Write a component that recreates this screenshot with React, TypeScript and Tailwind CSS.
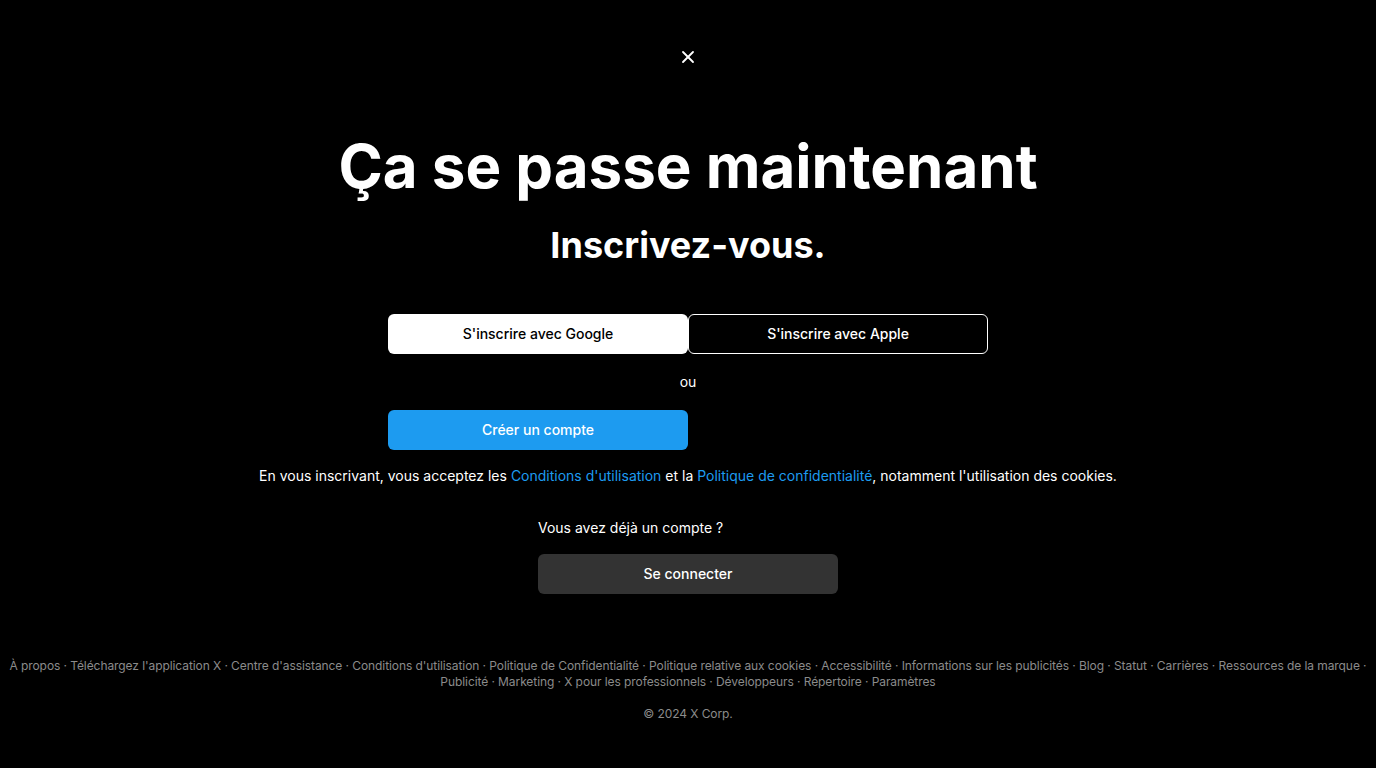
import { X } from 'lucide-react'

const FOOTER_LINKS = [
  'À propos',
  "Téléchargez l'application X",
  "Centre d'assistance",
  "Conditions d'utilisation",
  'Politique de Confidentialité',
  'Politique relative aux cookies',
  'Accessibilité',
  'Informations sur les publicités',
  'Blog',
  'Statut',
  'Carrières',
  'Ressources de la marque',
  'Publicité',
  'Marketing',
  'X pour les professionnels',
  'Développeurs',
  'Répertoire',
  'Paramètres',
]

export default function App() {
  return (
    <div className="min-h-screen bg-black text-white flex flex-col items-center font-['Inter',sans-serif]">
      {/* Close */}
      <button className="mt-[47px] w-5 h-5 flex items-center justify-center text-white">
        <X size={20} strokeWidth={2.2} />
      </button>

      {/* Headings */}
      <h1 className="mt-[63px] text-[60px] leading-[72px] font-bold">
        Ça se passe maintenant
      </h1>
      <h2 className="mt-[21px] text-[36px] leading-[44px] font-bold">
        Inscrivez-vous.
      </h2>

      {/* Sign-up buttons */}
      <div className="mt-[47px] flex">
        <button className="w-[300px] h-[40px] rounded-md bg-white text-black text-sm font-medium">
          S'inscrire avec Google
        </button>
        <button className="w-[300px] h-[40px] rounded-md border border-white bg-black text-white text-sm font-medium">
          S'inscrire avec Apple
        </button>
      </div>

      <div className="mt-[18px] text-sm leading-5">ou</div>

      <div className="mt-[18px] w-[600px] flex">
        <button className="w-[300px] h-[40px] rounded-md bg-[#1d9bf0] text-white text-sm font-medium">
          Créer un compte
        </button>
      </div>

      <p className="mt-[16px] text-sm leading-5">
        En vous inscrivant, vous acceptez les{' '}
        <a className="text-[#1d9bf0]">Conditions d'utilisation</a> et la{' '}
        <a className="text-[#1d9bf0]">Politique de confidentialité</a>, notamment l'utilisation des cookies.
      </p>

      {/* Login */}
      <div className="mt-[32px] w-[300px]">
        <p className="text-sm leading-5">Vous avez déjà un compte ?</p>
        <button className="mt-[16px] w-[300px] h-[40px] rounded-md bg-[#333333] text-white text-sm font-medium">
          Se connecter
        </button>
      </div>

      {/* Footer */}
      <footer className="mt-[64px] w-full text-center text-xs leading-4 tracking-[-0.08px] text-[#8b8b8b]">
        <p>
          {FOOTER_LINKS.map((l, i) =>
            i < FOOTER_LINKS.length - 1 ? `${l}\u00a0· ` : l
          ).join('')}
        </p>
        <p className="mt-[16px]">© 2024 X Corp.</p>
      </footer>
    </div>
  )
}
